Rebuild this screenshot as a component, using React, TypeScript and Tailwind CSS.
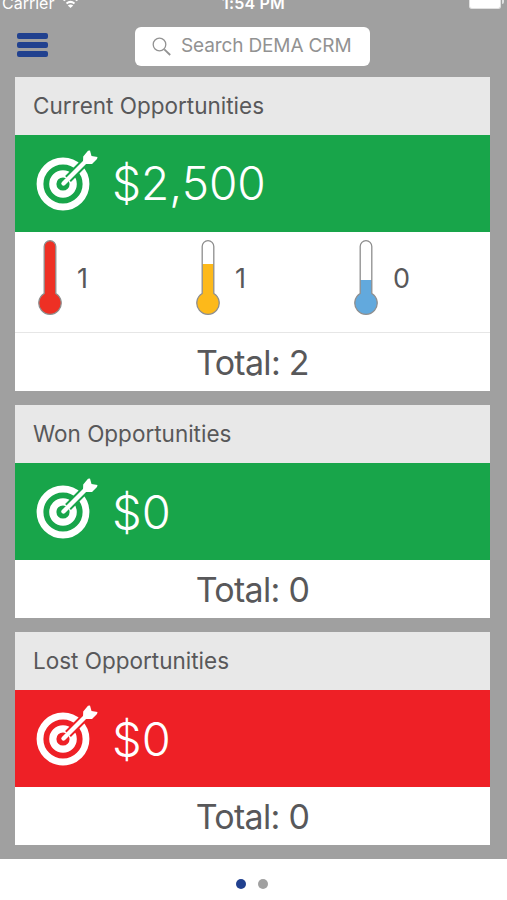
import React from "react";

function TargetIcon({ background }: { background: string }) {
  return (
    <svg width="64" height="64" viewBox="0 0 64 64" fill="none" className="shrink-0">
      <circle cx="27" cy="36" r="23" stroke="#fff" strokeWidth="6.8" />
      <circle cx="27" cy="36" r="10.2" stroke="#fff" strokeWidth="7.2" />
      <path d="M32 31 52 11" stroke={background} strokeWidth="8.200" />
      <path d="M27.500 35.500 51 12" stroke="#fff" strokeWidth="4.400" strokeLinecap="round" />
      <path
        d="M47.200 8.500 52 2.700 54 2.500 55.500 8 61.500 9.100 61 11 56 16.100 48.500 16.100 47 14.700Z"
        fill="#fff"
      />
    </svg>
  );
}

function Thermometer({ color, level }: { color: string; level: number }) {
  const outline = "M6.200 54.500V7.500a5.800 5.800 0 0 1 11.600 0V54.500a11.200 11.200 0 1 1-11.600 0Z";
  const clip = `level-${level}`;
  return (
    <svg width="24" height="78" viewBox="0 0 24 78" className="shrink-0">
      <clipPath id={clip}>
        <rect x="0" y={level} width="24" height={78 - level} />
      </clipPath>
      <path d={outline} fill="#fff" />
      <path d={outline} fill={color} clipPath={`url(#${clip})`} />
      <path d={outline} fill="none" stroke="#8e8e8e" strokeWidth="1.300" />
    </svg>
  );
}

function Reading({ color, level, count }: { color: string; level: number; count: number }) {
  return (
    <div className="flex w-[158px] shrink-0 items-start gap-[15px]">
      <Thermometer color={color} level={level} />
      <span className="mt-[22px] text-[27px] leading-[36px]">{count}</span>
    </div>
  );
}

interface CardProps {
  title: string;
  amount: string;
  amountClass: string;
  total: number;
  lost?: boolean;
  children?: React.ReactNode;
}

function Card({ title, amount, amountClass, total, lost, children }: CardProps) {
  return (
    <section className="bg-white text-[#58585a]">
      <h2 className="h-[58px] bg-[#e8e8e8] pl-[18px] text-[22.500px] leading-[58px]">{title}</h2>
      <div className={`flex h-[97px] pl-[21px] pt-[13px] text-white ${lost ? "bg-[#ee2026]" : "bg-[#18a54a]"}`}>
        <TargetIcon background={lost ? "#ee2026" : "#18a54a"} />
        <span className={`ml-[12px] font-light leading-[56px] ${amountClass}`}>{amount}</span>
      </div>
      {children}
      <div className="h-[58px] text-center text-[34px] leading-[59px] tracking-[-0.7px]">Total: {total}</div>
    </section>
  );
}

export default function App() {
  return (
    <div className="flex h-[900px] w-[507px] flex-col overflow-hidden bg-white font-['Inter',sans-serif]">
      <main className="h-[859px] bg-[#a0a0a0]">
        <div className="grid h-[27px] grid-cols-[1fr_auto_1fr] text-[16px] text-white">
          <div className="-mt-[7px] flex gap-[9px] pl-[2px] leading-[20px]">
            <span>Carrier</span>
            <svg width="15" height="15" viewBox="0 0 15 15" fill="none">
              <path d="M.5 7.500Q7.500 2 14.500 7.500M3.500 10.500Q7.500 7.300 11.500 10.500" stroke="#fff" strokeWidth="2" />
              <path d="M4.800 12.500Q7.500 10.500 10.200 12.500L7.500 15Z" fill="#fff" />
            </svg>
          </div>
          <span className="-mt-[7px] font-semibold leading-[20px] tracking-[0.2px]">1:54 PM</span>
          <div className="flex justify-end pr-[3px]">
            <div className="h-[9px] w-[32px] rounded-b-[3px] border border-t-0 border-[#e0e0e0] bg-white" />
            <div className="ml-px h-[4px] w-[2px] rounded-br bg-[#e0e0e0]" />
          </div>
        </div>
        <header className="flex h-[50px] items-start">
          <button className="ml-[17px] mt-[6px] flex w-[31px] flex-col gap-[3px]" aria-label="Menu">
            <i className="h-[6px] w-full rounded-[2px] bg-[#21418f]" />
            <i className="h-[6px] w-full rounded-[2px] bg-[#21418f]" />
            <i className="h-[6px] w-full rounded-[2px] bg-[#21418f]" />
          </button>
          <div className="ml-[87px] flex h-[39px] w-[235px] items-center rounded-[6px] bg-white pl-[17px] text-[#929292]">
            <svg width="20" height="20" viewBox="0 0 20 20" fill="none" stroke="currentColor">
              <circle cx="7.500" cy="7.500" r="6.300" strokeWidth="1.300" />
              <path d="m12.300 12.300 5.900 5.700" strokeWidth="1.800" />
            </svg>
            <span className="ml-[9px] whitespace-nowrap text-[19px] tracking-[-0.13px]">Search DEMA CRM</span>
          </div>
        </header>
        <div className="ml-[15px] flex w-[475px] flex-col gap-[14px]">
          <Card title="Current Opportunities" amount="$2,500" amountClass="mt-[7px] text-[46px]" total={2}>
            <div className="flex h-[101px] border-b border-[#e6e6e6] pl-[23px] pt-[7px]">
              <Reading color="#ee3024" level={0} count={1} />
              <Reading color="#fdb91a" level={25} count={1} />
              <Reading color="#62a9dd" level={41} count={0} />
            </div>
          </Card>
          <Card title="Won Opportunities" amount="$0" amountClass="mt-[8px] text-[47px]" total={0} />
          <Card title="Lost Opportunities" amount="$0" amountClass="mt-[8px] text-[47px]" total={0} lost />
        </div>
      </main>
      <footer className="flex flex-1 items-center justify-center gap-[12px] pr-[3px] pt-[9px]">
        <span className="h-[10px] w-[10px] rounded-full bg-[#21418f]" />
        <span className="h-[10px] w-[10px] rounded-full bg-[#a0a0a0]" />
      </footer>
    </div>
  );
}
